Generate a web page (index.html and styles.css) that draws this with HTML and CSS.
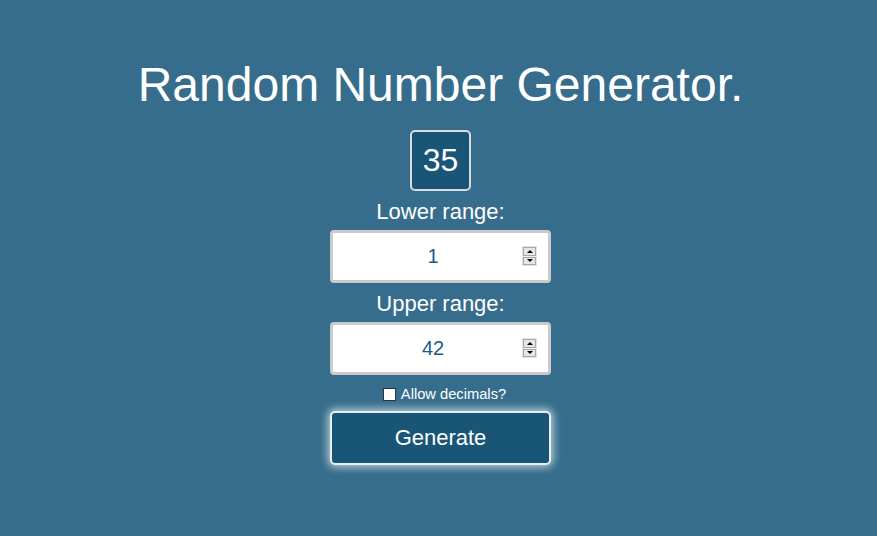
FILE: index.html
```html
<!DOCTYPE html>
<html>
<head>
<meta charset="utf-8">
<link rel="stylesheet" href="styles.css">
</head>
<body>
<main class="app">
  <h1 class="title">Random Number Generator.</h1>
  <div class="result">35</div>
  <label class="label" for="lower">Lower range:</label>
  <div class="field">
    <input class="range" id="lower" type="text" value="1">
    <span class="spinner"><span class="spin up"></span><span class="spin down"></span></span>
  </div>
  <label class="label" for="upper">Upper range:</label>
  <div class="field">
    <input class="range" id="upper" type="text" value="42">
    <span class="spinner"><span class="spin up"></span><span class="spin down"></span></span>
  </div>
  <label class="check"><input type="checkbox" class="box"> Allow decimals?</label>
  <button class="generate">Generate</button>
</main>
</body>
</html>
```
FILE: styles.css
```css
html, body {
  margin: 0;
  height: 100%;
}
body {
  background: #366d8c;
  font-family: "Liberation Sans", Arial, sans-serif;
  color: #fff;
}
.app {
  display: flex;
  flex-direction: column;
  align-items: center;
  padding-top: 57px;
  padding-left: 4px;
}
.title {
  margin: 0;
  font-size: 48px;
  font-weight: normal;
  line-height: 56px;
}
.result {
  margin-top: 17px;
  width: 57px;
  height: 57px;
  border: 2px solid #dcdcdc;
  border-radius: 5px;
  background: #195576;
  font-size: 32px;
  display: flex;
  align-items: center;
  justify-content: center;
}
.label {
  margin-top: 8px;
  font-size: 22px;
  line-height: 26px;
}
.field {
  margin-top: 5px;
  position: relative;
  width: 221px;
  height: 53px;
}
.range {
  box-sizing: border-box;
  width: 100%;
  height: 100%;
  margin: 0;
  border: 3px solid #cacaca;
  border-radius: 4px;
  background: #fff;
  color: #1a5c8a;
  font-family: "Liberation Sans", Arial, sans-serif;
  font-size: 20px;
  text-align: center;
  padding: 0 19px 0 4px;
  outline: none;
}
.spinner {
  position: absolute;
  right: 14px;
  top: 16px;
  width: 15px;
  height: 20px;
  box-sizing: border-box;
  border: 1px solid #e2e2e2;
  background: #f0f0f0;
  display: flex;
  flex-direction: column;
  gap: 1px;
}
.spin {
  flex: 1;
  border: 1px solid #a8a8a8;
  background: #e6e6e6;
  display: flex;
  align-items: center;
  justify-content: center;
}
.spin::after {
  content: "";
  width: 0;
  height: 0;
  border-left: 3px solid transparent;
  border-right: 3px solid transparent;
}
.up::after {
  border-bottom: 3px solid #000;
}
.down::after {
  border-top: 3px solid #000;
}
.check {
  margin-top: 11px;
  padding-left: 8px;
  font-size: 14.7px;
  line-height: 17px;
  display: flex;
  align-items: center;
  gap: 5px;
}
.box {
  appearance: none;
  -webkit-appearance: none;
  margin: 0;
  width: 13px;
  height: 13px;
  border: 1px solid #333;
  background: #fff;
  border-radius: 0;
}
.generate {
  margin-top: 8px;
  width: 221px;
  height: 54px;
  box-sizing: border-box;
  background: #195576;
  border: 2px solid #e8eef2;
  border-radius: 5px;
  color: #fff;
  font-family: "Liberation Sans", Arial, sans-serif;
  font-size: 22px;
  box-shadow: 0 0 8px 2px rgba(255,255,255,0.7);
}
```
